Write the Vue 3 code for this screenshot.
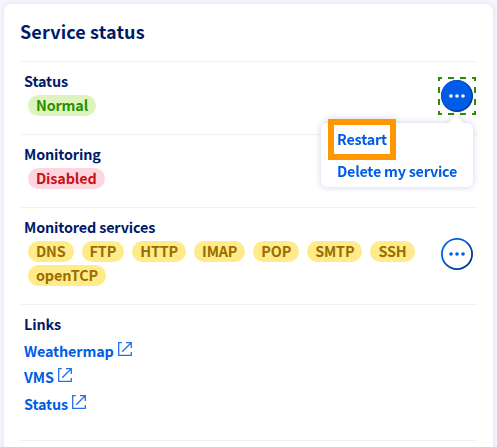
<script setup>
const services = ['DNS', 'FTP', 'HTTP', 'IMAP', 'POP', 'SMTP', 'SSH', 'openTCP']
const links = ['Weathermap', 'VMS', 'Status']
</script>

<template>
  <main class="page">
    <section class="card">
      <h2 class="title">Service status</h2>

      <div class="row">
        <div class="info">
          <div class="label">Status</div>
          <div class="badges"><span class="badge success">Normal</span></div>
        </div>
        <div class="action">
          <button class="focus" aria-label="Status actions">
            <svg class="icon-focused" viewBox="-3 -3 38 38">
              <rect x="-2" y="-2" width="36" height="36" fill="none" stroke="#2b8f00" stroke-width="2" stroke-dasharray="6 6" stroke-dashoffset="3" />
              <circle cx="16" cy="16" r="16" fill="#00369a" />
              <circle cx="15.4" cy="15.4" r="15.2" fill="#005ce6" />
              <g fill="#fff">
                <circle cx="10" cy="16" r="1.8" />
                <circle cx="16" cy="16" r="1.8" />
                <circle cx="22" cy="16" r="1.8" />
              </g>
            </svg>
          </button>
          <div class="menu">
            <a class="item highlighted">Restart</a>
            <a class="item">Delete my service</a>
          </div>
        </div>
      </div>

      <div class="row">
        <div class="info">
          <div class="label">Monitoring</div>
          <div class="badges"><span class="badge error">Disabled</span></div>
        </div>
      </div>

      <div class="row">
        <div class="info">
          <div class="label">Monitored services</div>
          <div class="badges">
            <span v-for="s in services" :key="s" class="badge warning">{{ s }}</span>
          </div>
        </div>
        <div class="action">
          <button class="plain" aria-label="Monitored services actions">
            <svg class="icon" viewBox="0 0 32 32">
              <defs>
                <linearGradient id="ring" x1="0" y1="0" x2="1" y2="1">
                  <stop offset="0.3" stop-color="#0060e8" />
                  <stop offset="0.8" stop-color="#00378f" />
                </linearGradient>
              </defs>
              <circle cx="16" cy="16" r="15.1" fill="#fff" stroke="url(#ring)" stroke-width="1.8" />
              <g fill="#005ce6">
                <circle cx="10" cy="16" r="1.8" />
                <circle cx="16" cy="16" r="1.8" />
                <circle cx="22" cy="16" r="1.8" />
              </g>
            </svg>
          </button>
        </div>
      </div>

      <div class="row last">
        <div class="info">
          <div class="label">Links</div>
          <div class="links">
            <a v-for="l in links" :key="l" class="link">
              <span>{{ l }}</span>
              <svg class="external" viewBox="0 0 14 14" fill="none" stroke="#2470e6" stroke-width="1.3">
                <path d="M3.8 0.7H0.7V13.3H13.3V10" />
                <path d="M8 0.7H13.3V6M13.2 0.8L4.2 9.8" />
              </svg>
            </a>
          </div>
        </div>
      </div>
    </section>
  </main>
</template>

<style>
body {
  background: #f6f6fd;
  overflow: hidden;
}
</style>

<style scoped>
.page {
  box-sizing: border-box;
  height: 447px;
  padding: 4px 4px 0;
  font-family: "Noto Sans CJK JP", "Noto Sans", sans-serif;
  font-size: 14.4px;
  font-weight: 700;
  letter-spacing: -0.15px;
  color: #001a69;
}
.card {
  box-sizing: border-box;
  height: 460px;
  padding: 0 16px;
  border-radius: 7px;
  background: #fff;
  box-shadow: 0 0 6px rgba(0, 14, 156, 0.1);
}
.title {
  margin: 0;
  height: 57px;
  line-height: 54px;
  font-size: 18px;
  letter-spacing: 0.12px;
}
.row {
  display: flex;
  align-items: center;
  justify-content: space-between;
  padding: 8px 0 16px 4px;
  border-top: 1px solid #f2f2f2;
}
.last {
  height: 111px;
  align-items: flex-start;
  border-bottom: 1px solid #f2f2f2;
}
.label {
  height: 24px;
  line-height: 22px;
}
.info {
  width: 400px;
}
.badges {
  display: flex;
  flex-wrap: wrap;
  gap: 3px 8px;
  padding: 1px 0 2px 4px;
}
.badge {
  height: 21px;
  padding: 0 8px;
  border-radius: 11px;
  line-height: 19px;
}
.success { background: #def4bf; color: #2b8f00; }
.error { background: #ffd6e0; color: #c91017; }
.warning { background: #ffeb8a; color: #996d00; }
.action {
  position: relative;
  display: flex;
  margin-right: 4px;
  padding-top: 4px;
}
button {
  display: flex;
  padding: 0;
  border: 0;
  background: none;
}
.icon {
  display: block;
  width: 32px;
  height: 32px;
}
.icon-focused {
  display: block;
  width: 38px;
  height: 38px;
}
.focus {
  margin: -3px;
}
.menu {
  position: absolute;
  z-index: 2;
  top: 47px;
  right: 0;
  box-sizing: border-box;
  display: flex;
  flex-direction: column;
  width: 152px;
  height: 64px;
  padding: 0 7px;
  border-radius: 6px;
  background: #fff;
  filter: drop-shadow(0 0 3px rgba(0, 14, 156, 0.2));
}
.menu::before {
  content: "";
  position: absolute;
  top: -8px;
  right: 8px;
  width: 18px;
  height: 9px;
  background: #fff;
  clip-path: polygon(50% 0, 100% 100%, 0 100%);
}
.item {
  height: 32px;
  padding-left: 9px;
  line-height: 32px;
  letter-spacing: -0.25px;
  color: #005ce6;
  white-space: nowrap;
}
.highlighted {
  box-sizing: border-box;
  flex: none;
  width: 68px;
  height: 41px;
  margin-top: -4px;
  margin-bottom: -5px;
  padding-left: 3px;
  border: 6px solid #ff9800;
  line-height: 28px;
  letter-spacing: -0.2px;
}
.links {
  padding-top: 2px;
}
.link {
  display: flex;
  gap: 4.3px;
  height: 26.4px;
  line-height: 24px;
  color: #005ce6;
}
.external {
  width: 14px;
  height: 14px;
  margin-top: 3px;
}
</style>
